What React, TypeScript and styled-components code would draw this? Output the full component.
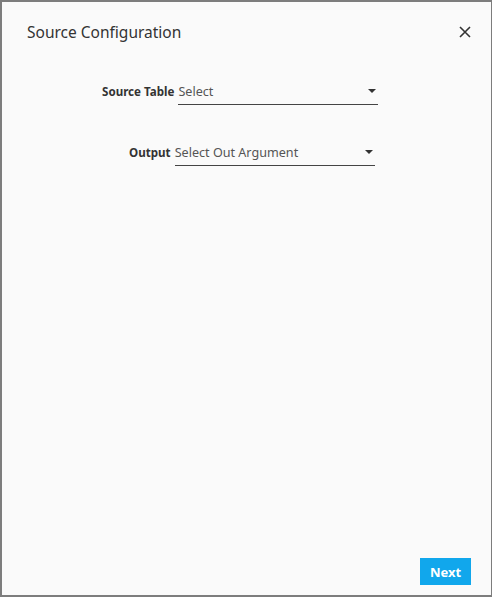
import React, { useState } from "react";
import styled, { createGlobalStyle } from "styled-components";

const GlobalStyle = createGlobalStyle`
  html, body {
    margin: 0;
    padding: 0;
    background: #fafafa;
  }
  * {
    box-sizing: border-box;
  }
`;

const Dialog = styled.div`
  width: 492px;
  height: 597px;
  border: 2px solid #7d7d7d;
  border-right-width: 1px;
  background: #fafafa;
  display: flex;
  flex-direction: column;
  font-family: "Noto Sans", "Open Sans", sans-serif;
  color: #333;
`;

const Header = styled.div`
  display: flex;
  align-items: center;
  justify-content: space-between;
  padding: 16px 18px 0 25px;
  height: 43px;
`;

const Title = styled.h1`
  margin: 0;
  font-size: 15.5px;
  font-weight: 400;
  color: #333;
`;

const CloseButton = styled.button`
  border: none;
  background: transparent;
  padding: 0;
  width: 16px;
  height: 16px;
  display: flex;
  align-items: center;
  justify-content: center;
  cursor: pointer;
`;

const Body = styled.div`
  flex: 1;
  display: flex;
  flex-direction: column;
  gap: 37px;
  padding-top: 36px;
`;

const Row = styled.div<{ $indent: number }>`
  display: flex;
  align-items: baseline;
  padding-left: ${({ $indent }) => $indent}px;
`;

const Label = styled.span`
  font-size: 11.6px;
  font-weight: 700;
  color: #333;
  margin-right: 4px;
  white-space: nowrap;
`;

const SelectBox = styled.div`
  width: 200px;
  height: 24px;
  display: flex;
  align-items: center;
  justify-content: space-between;
  border-bottom: 1px solid #444;
  font-size: 12.6px;
  color: #555;
  padding: 0 2px 3px 0;
  cursor: pointer;
`;

const Caret = styled.span`
  width: 0;
  height: 0;
  border-left: 4px solid transparent;
  border-right: 4px solid transparent;
  border-top: 4px solid #333;
`;

const Footer = styled.div`
  display: flex;
  justify-content: flex-end;
  padding: 0 20px 10px 0;
`;

const NextButton = styled.button`
  width: 51px;
  height: 27px;
  border: none;
  background: #11a7ec;
  color: #fff;
  font-family: "Noto Sans", "Open Sans", sans-serif;
  font-size: 13px;
  font-weight: 700;
  cursor: pointer;
`;

const fields = [
  { label: "Source Table", placeholder: "Select", indent: 100 },
  { label: "Output", placeholder: "Select Out Argument", indent: 127 },
];

export default function App() {
  const [open, setOpen] = useState(true);

  return (
    <>
      <GlobalStyle />
      <Dialog>
        <Header>
          <Title>Source Configuration</Title>
          <CloseButton aria-label="Close" onClick={() => setOpen(!open)}>
            <svg width="12" height="12" viewBox="0 0 12 12">
              <path d="M1 1L11 11M11 1L1 11" stroke="#333" strokeWidth="1.6" />
            </svg>
          </CloseButton>
        </Header>
        <Body>
          {fields.map((f) => (
            <Row key={f.label} $indent={f.indent}>
              <Label>{f.label}</Label>
              <SelectBox>
                <span>{f.placeholder}</span>
                <Caret />
              </SelectBox>
            </Row>
          ))}
        </Body>
        <Footer>
          <NextButton>Next</NextButton>
        </Footer>
      </Dialog>
    </>
  );
}
